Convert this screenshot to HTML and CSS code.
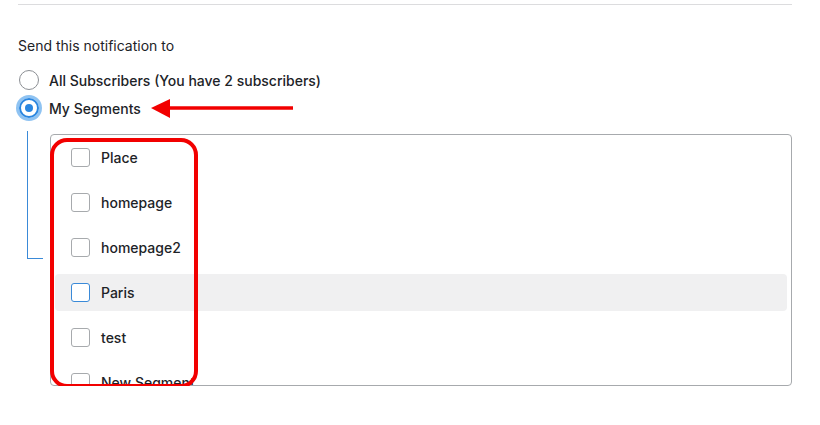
FILE: index.html
```html
<!DOCTYPE html>
<html lang="en">
<head>
  <meta charset="UTF-8" />
  <meta name="viewport" content="width=device-width, initial-scale=1" />
  <title>Send notification</title>
  <link rel="stylesheet" href="styles.css">
</head>
<body>
  <div class="panel">
    <div class="divider"></div>

    <p class="title">Send this notification to</p>

    <div class="options">
      <label class="option">
        <span class="radio"></span>
        <span>All Subscribers (You have 2 subscribers)</span>
      </label>
      <label class="option">
        <span class="radio checked"></span>
        <span>My Segments</span>
        <svg class="arrow" width="150" height="24" viewBox="0 0 150 24">
          <line x1="16" y1="11" x2="142" y2="11" stroke="#f20000" stroke-width="3.5" />
          <polygon points="0,11 19,2 19,21" fill="#f20000" />
        </svg>
      </label>
    </div>

    <div class="segments">
      <div class="branch"></div>
      <div class="list-wrap">
        <ul class="list">
          <li class="item"><span class="check"></span>Place</li>
          <li class="item"><span class="check"></span>homepage</li>
          <li class="item"><span class="check"></span>homepage2</li>
          <li class="item hover"><span class="check"></span>Paris</li>
          <li class="item"><span class="check"></span>test</li>
          <li class="item"><span class="check"></span>New Segment</li>
        </ul>
        <div class="highlight"></div>
      </div>
    </div>
  </div>
</body>
</html>
```

FILE: styles.css
```css
body {
  margin: 0;
  font-family: Inter, "Noto Sans", sans-serif;
  font-size: 14px;
  color: #1d2327;
  background: #fff;
}
.panel {
  width: 774px;
  padding: 4px 0 0 18px;
}
.divider {
  height: 1px;
  background: #dcdcde;
}
.title {
  margin: 32px 0 0;
  line-height: 18px;
}
.options {
  margin-top: 11px;
}
.option {
  display: flex;
  align-items: center;
  gap: 10px;
  height: 28px;
  font-weight: 500;
  position: relative;
}
.radio {
  width: 18px;
  height: 18px;
  border: 1px solid #8c8f94;
  border-radius: 50%;
  box-sizing: content-box;
  margin-left: 1px;
  position: relative;
}
.radio.checked {
  border: 2px solid #2a86e0;
  width: 16px;
  height: 16px;
  box-shadow: 0 0 0 3px #8fc3f2;
}
.radio.checked::after {
  content: "";
  position: absolute;
  left: 4px;
  top: 4px;
  width: 8px;
  height: 8px;
  border-radius: 50%;
  background: #2a86e0;
}
.arrow {
  position: absolute;
  left: 133px;
  top: 3px;
}
.segments {
  display: flex;
  margin-top: 12px;
}
.branch {
  width: 15px;
  height: 127px;
  margin: -3px 0 0 9px;
  border-left: 1px solid #3a8ad8;
  border-bottom: 1px solid #3a8ad8;
}
.list-wrap {
  position: relative;
  margin-left: 7px;
}
.list {
  list-style: none;
  margin: 0;
  width: 732px;
  height: 240px;
  padding: 4px 4px 6px;
  border: 1px solid #a7aaad;
  border-radius: 4px;
  overflow: hidden;
}
.item {
  display: flex;
  align-items: center;
  gap: 11px;
  height: 37px;
  margin-bottom: 8px;
  padding-left: 16px;
  border-radius: 4px;
  font-weight: 500;
}
.item.hover {
  background: #f0f0f1;
}
.check {
  width: 17px;
  height: 17px;
  border: 1px solid #a7aaad;
  border-radius: 3px;
  background: #fff;
}
.item.hover .check {
  border-color: #3a8ad8;
}
.highlight {
  position: absolute;
  left: 0;
  top: 4px;
  width: 140px;
  height: 242px;
  border: 4px solid #f20000;
  border-radius: 17px;
}
```
